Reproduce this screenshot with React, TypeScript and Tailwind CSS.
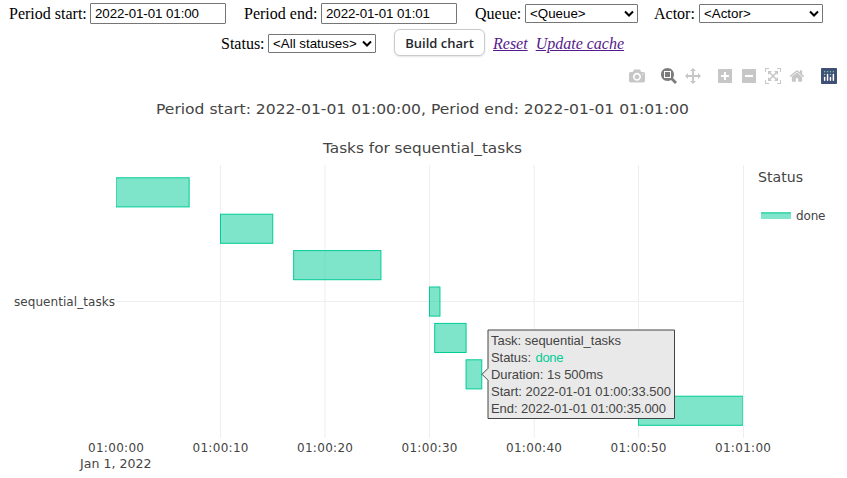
import React from 'react';

const SERIF = "font-['Liberation_Serif',serif]";
const SANS = "font-['Liberation_Sans',sans-serif]";

function Chevron() {
  return (
    <svg className="pointer-events-none absolute right-[4px] top-[6px]" width="10" height="8" viewBox="0 0 10 8">
      <path d="M1 1.5L5 5.5L9 1.5" fill="none" stroke="#000" strokeWidth="2" />
    </svg>
  );
}

function Select({ value, width }: { value: string; width: number }) {
  return (
    <span className={`relative block h-[19px] text-[13.333px] leading-[17px] text-black ${SANS}`} style={{ width }}>
      <select className="block h-[19px] w-full appearance-none rounded-[1px] border border-[#767676] bg-white pl-[4px]">
        <option>{value}</option>
      </select>
      <Chevron />
    </span>
  );
}

function Label({ children, width }: { children: React.ReactNode; width: number }) {
  return (
    <span className="block whitespace-nowrap" style={{ width }}>
      {children}
    </span>
  );
}

function DateInput({ value }: { value: string }) {
  return (
    <input
      readOnly
      value={value}
      className={`block h-[21px] w-[136px] rounded-[1px] border border-[#767676] bg-white px-[4px] text-[13.333px] tracking-[-0.08px] text-black outline-none ${SANS}`}
    />
  );
}

const ICONS = {
  camera:
    'm500 450c-83 0-150-67-150-150 0-83 67-150 150-150 83 0 150 67 150 150 0 83-67 150-150 150z m400 150h-120c-16 0-34 13-39 29l-31 93c-6 15-23 28-40 28h-340c-16 0-34-13-39-28l-31-94c-6-15-23-28-40-28h-120c-55 0-100-45-100-100v-450c0-55 45-100 100-100h800c55 0 100 45 100 100v450c0 55-45 100-100 100z m-400-550c-138 0-250 112-250 250 0 138 112 250 250 250 138 0 250-112 250-250 0-138-112-250-250-250z m365 380c-19 0-35 16-35 35 0 19 16 35 35 35 19 0 35-16 35-35 0-19-16-35-35-35z',
  zoom: 'm1000-25l-250 251c40 63 63 138 63 218 0 224-182 406-407 406-224 0-406-182-406-406s183-406 407-406c80 0 155 22 218 62l250-250 125 125z m-812 250l0 438 437 0 0-438-437 0z m62 375l313 0 0-312-313 0 0 312z',
  pan: 'm1000 350l-187 188 0-125-250 0 0 250 125 0-188 187-187-187 125 0 0-250-250 0 0 125-188-188 186-187 0 125 252 0 0-250-125 0 187-188 188 188-125 0 0 250 250 0 0-126 187 188z',
  plus: 'm1 787l0-875 875 0 0 875-875 0z m687-500l-187 0 0-187-125 0 0 187-188 0 0 125 188 0 0 187 125 0 0-187 187 0 0-125z',
  minus: 'm0 788l0-876 875 0 0 876-875 0z m688-500l-500 0 0 125 500 0 0-125z',
  autoscale:
    'm250 850l-187 0-63 0 0-62 0-188 63 0 0 188 187 0 0 62z m688 0l-188 0 0-62 188 0 0-188 62 0 0 188 0 62-62 0z m-875-938l0 188-63 0 0-188 0-62 63 0 187 0 0 62-187 0z m875 188l0-188-188 0 0-62 188 0 62 0 0 62 0 188-62 0z m-125 188l-1 0-93-94-156 156 156 156 92-93 2 0 0 250-250 0 0-2 93-92-156-156-156 156 94 92 0 2-250 0 0-250 0 0 93 93 157-156-157-156-93 94 0 0 0-250 250 0 0 0-94 93 156 157 156-157-93-93 0 0 250 0 0 250z',
  home: 'm786 296v-267q0-15-11-26t-25-10h-214v214h-143v-214h-214q-15 0-25 10t-11 26v267q0 1 0 2t0 2l321 264 321-264q1-1 1-4z m124 39l-34-41q-5-5-12-6h-2q-7 0-12 3l-386 322-386-322q-7-4-13-4-7 2-12 7l-35 41q-4 5-3 13t6 12l401 334q18 15 42 15t43-15l136-114v109q0 8 5 13t13 5h107q8 0 13-5t5-13v-227l122-102q5-5 6-12t-4-13z',
};

function ModeIcon({ name, width = 1000, active = false }: { name: keyof typeof ICONS; width?: number; active?: boolean }) {
  return (
    <svg width="16" height="16" viewBox={`0 0 ${width} 1000`}>
      <path d={ICONS[name]} transform="matrix(1 0 0 -1 0 850)" fill={active ? '#7c7c7c' : '#c7c7c7'} />
    </svg>
  );
}

function PlotlyLogo() {
  const dots = [[78, 54], [102, 30], [78, 30], [54, 30], [30, 30], [30, 54]];
  return (
    <svg width="16" height="16" viewBox="0 0 132 132">
      <rect width="132" height="132" rx="6" fill="#3f4f75" />
      {dots.map(([x, y]) => (
        <circle key={`${x}-${y}`} cx={x} cy={y} r="6" fill="#80cfbe" />
      ))}
      <g fill="#fff">
        <rect x="24" y="72" width="12" height="36" rx="6" />
        <rect x="72" y="72" width="12" height="36" rx="6" />
        <rect x="48" y="48" width="12" height="60" rx="6" />
        <rect x="96" y="48" width="12" height="60" rx="6" />
      </g>
    </svg>
  );
}

// Start and end of every task, in seconds after 01:00:00.
const TASKS = [
  [0, 7],
  [10, 15],
  [17, 25.35],
  [30, 31],
  [30.5, 33.5],
  [33.5, 35],
  [50, 60],
];
const TICKS = ['01:00:00', '01:00:10', '01:00:20', '01:00:30', '01:00:40', '01:00:50', '01:01:00'];
const X0 = 116;
const PER_SEC = 10.45;

// The chart's own coordinates start at y = 88, below the mode bar.
function Chart() {
  return (
    <svg
      className="block font-['DejaVu_Sans',Verdana,sans-serif]"
      width="847"
      height="390"
      viewBox="0 88 847 390"
      fill="#444"
    >
      <defs>
        <clipPath id="plot">
          <rect x="116" y="165" width="627" height="273" />
        </clipPath>
      </defs>
      <text x="156" y="114" fontSize="14.6" textLength="533" lengthAdjust="spacingAndGlyphs">
        Period start: 2022-01-01 01:00:00, Period end: 2022-01-01 01:01:00
      </text>
      <text x="323" y="153" fontSize="14.6" textLength="199" lengthAdjust="spacingAndGlyphs">
        Tasks for sequential_tasks
      </text>
      <g fill="#eee">
        {[220, 324.5, 429, 533.7, 638, 743].map((x) => (
          <rect key={x} x={x} y="165" width="1" height="273" />
        ))}
        <rect x="116" y="301" width="628" height="1" />
      </g>
      <g clipPath="url(#plot)">
        {TASKS.map(([a, b], i) => (
          <rect
            key={a}
            x={X0 + a * PER_SEC}
            y={177.8 + i * 36.4}
            width={(b - a) * PER_SEC}
            height="29.1"
            fill="#00cc96"
            fillOpacity="0.5"
            stroke="#00cc96"
            strokeWidth="1"
          />
        ))}
      </g>
      <text x="14" y="306" fontSize="12" textLength="101">
        sequential_tasks
      </text>
      {TICKS.map((t, i) => (
        <text key={t} x={88 + i * 104.5} y="452" fontSize="12" textLength="56">
          {t}
        </text>
      ))}
      <text x="80" y="468" fontSize="12.2" textLength="71.5" lengthAdjust="spacingAndGlyphs">
        Jan 1, 2022
      </text>
      <text x="758" y="182" fontSize="14" textLength="45" lengthAdjust="spacingAndGlyphs">
        Status
      </text>
      <rect x="761" y="212" width="30" height="7" fill="#80e5ca" />
      <rect x="761" y="212" width="30" height="2" fill="#4dd9b3" />
      <text x="796" y="220" fontSize="12" textLength="29.5">
        done
      </text>
      <g className={SANS} fontSize="13">
        <path
          d="M482 374.3L488 368.3V330H674.5V418.5H488V380.3Z"
          fill="#e9e9e9"
          stroke="#444"
          strokeWidth="1"
        />
        <text x="491" y="345" textLength="130">Task: sequential_tasks</text>
        <text x="491" y="362" textLength="40">Status:</text>
        <text x="535.5" y="362" fill="#00cc96" textLength="28">done</text>
        <text x="491" y="379" textLength="112">Duration: 1s 500ms</text>
        <text x="491" y="396" textLength="180">Start: 2022-01-01 01:00:33.500</text>
        <text x="491" y="413" textLength="175">End: 2022-01-01 01:00:35.000</text>
      </g>
    </svg>
  );
}

export default function App() {
  return (
    <div className="h-[478px] w-[847px] overflow-hidden bg-white">
      <form className={`text-[16px] leading-[18px] text-black ${SERIF}`}>
        <div className="flex h-[27px] items-center pl-[9px]">
          <Label width={81}>Period start:</Label>
          <DateInput value="2022-01-01 01:00" />
          <span className="w-[18px]" />
          <Label width={77}>Period end:</Label>
          <DateInput value="2022-01-01 01:01" />
          <span className="w-[18px]" />
          <Label width={50}>Queue:</Label>
          <Select value="<Queue>" width={113} />
          <span className="w-[16px]" />
          <Label width={45}>Actor:</Label>
          <Select value="<Actor>" width={124} />
        </div>
        <div className="flex h-[33px] items-center pl-[221px]">
          <Label width={47}>Status:</Label>
          <Select value="<All statuses>" width={108} />
          <button
            type="button"
            className="mb-[2px] ml-[18px] h-[27px] w-[91px] whitespace-nowrap rounded-[6px] border border-[#c8cacc] bg-white font-['Open_Sans',sans-serif] text-[13px] font-semibold leading-[20px] text-[#24292e] shadow-[0_1px_2px_rgba(27,31,35,0.12)]"
          >
            Build chart
          </button>
          <a className="ml-[8px] italic text-[#551a8b] underline">Reset</a>
          <a className="ml-[8px] whitespace-nowrap italic text-[#551a8b] underline">Update cache</a>
        </div>
      </form>
      <div className="flex h-[28px] items-center justify-end gap-[16px] pr-[10px] pt-[4px]">
        <ModeIcon name="camera" />
        <div className="flex gap-[8px]">
          <ModeIcon name="zoom" active />
          <ModeIcon name="pan" />
        </div>
        <div className="flex gap-[8px]">
          <ModeIcon name="plus" width={875} />
          <ModeIcon name="minus" width={875} />
          <ModeIcon name="autoscale" />
          <ModeIcon name="home" width={928.6} />
        </div>
        <PlotlyLogo />
      </div>
      <Chart />
    </div>
  );
}
